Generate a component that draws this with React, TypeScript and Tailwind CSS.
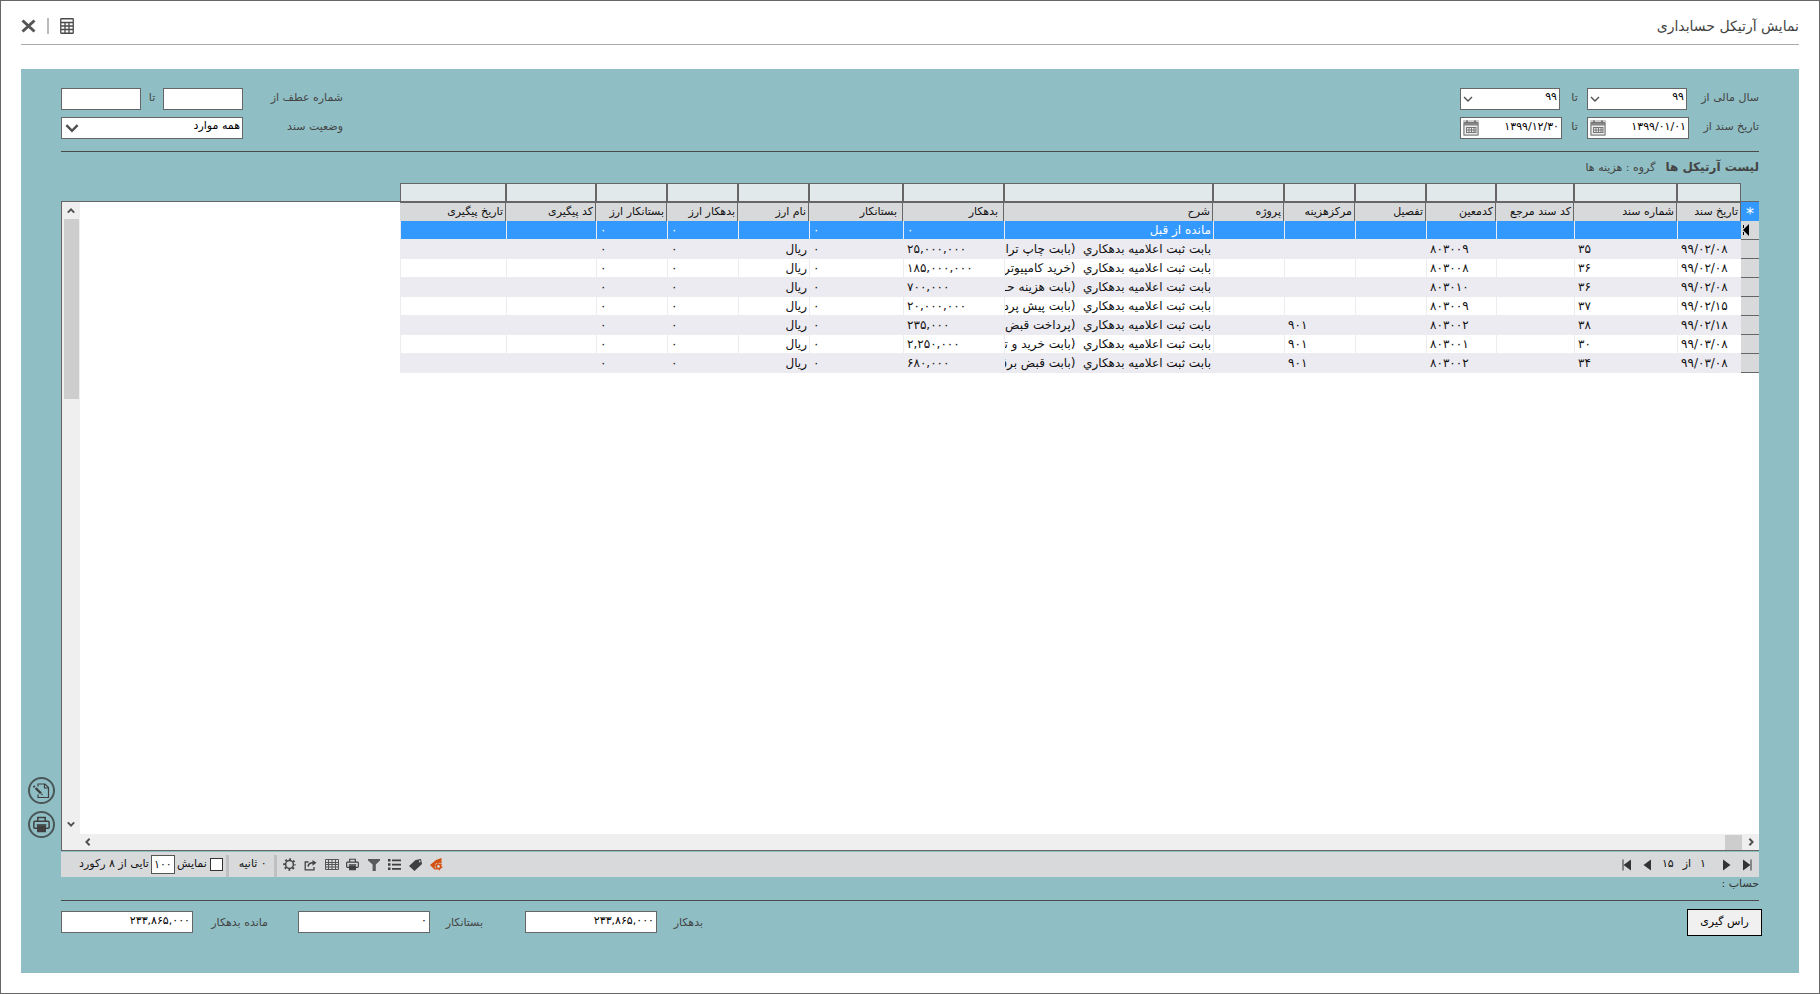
import React from 'react';
import { clsx } from 'clsx';

interface Column {
    title: string;
    width: string;
    key: string;
    text?: boolean;
    pad?: string;
}

const COLUMNS: Column[] = [
    { key: 'date', title: 'تاریخ سند', width: 'w-[64px]' },
    { key: 'number', title: 'شماره سند', width: 'w-[103px]' },
    { key: 'ref', title: 'کد سند مرجع', width: 'w-[78px]' },
    { key: 'account', title: 'کدمعین', width: 'w-[70px]' },
    { key: 'detail', title: 'تفصیل', width: 'w-[71px]' },
    { key: 'center', title: 'مرکزهزینه', width: 'w-[71px]' },
    { key: 'project', title: 'پروژه', width: 'w-[71px]' },
    { key: 'desc', title: 'شرح', width: 'w-[209px]', text: true },
    { key: 'debit', title: 'بدهکار', width: 'w-[101px]', pad: 'pr-[5px]' },
    { key: 'credit', title: 'بستانکار', width: 'w-[94px]', pad: 'pr-[5px]' },
    { key: 'currency', title: 'نام ارز', width: 'w-[71px]', text: true },
    { key: 'fxDebit', title: 'بدهکار ارز', width: 'w-[71px]' },
    { key: 'fxCredit', title: 'بستانکار ارز', width: 'w-[71px]' },
    { key: 'trackCode', title: 'کد پیگیری', width: 'w-[90px]' },
    { key: 'trackDate', title: 'تاریخ پیگیری', width: 'w-[106px]' },
];

type Row = Record<string, string>;

const entry = (date: string, number: string, account: string, center: string, note: string, debit: string): Row => ({
    date, number, account, center, debit,
    desc: `بابت ثبت اعلامیه بدهکاري  (${note}`,
    credit: '۰',
    currency: 'ریال',
    fxDebit: '۰',
    fxCredit: '۰',
});

const ROWS: Row[] = [
    { desc: 'مانده از قبل', debit: '۰', credit: '۰', fxDebit: '۰', fxCredit: '۰' },
    entry('۹۹/۰۲/۰۸', '۳۵', '۸۰۳۰۰۹', '', 'بابت چاپ ترا', '۲۵,۰۰۰,۰۰۰'),
    entry('۹۹/۰۲/۰۸', '۳۶', '۸۰۳۰۰۸', '', 'خرید کامپیوتر', '۱۸۵,۰۰۰,۰۰۰'),
    entry('۹۹/۰۲/۰۸', '۳۶', '۸۰۳۰۱۰', '', 'بابت هزینه حـ', '۷۰۰,۰۰۰'),
    entry('۹۹/۰۲/۱۵', '۳۷', '۸۰۳۰۰۹', '', 'بابت پیش پرد', '۲۰,۰۰۰,۰۰۰'),
    entry('۹۹/۰۲/۱۸', '۳۸', '۸۰۳۰۰۲', '۹۰۱', 'پرداخت قبض', '۲۳۵,۰۰۰'),
    entry('۹۹/۰۳/۰۸', '۳۰', '۸۰۳۰۰۱', '۹۰۱', 'بابت خرید و تـ', '۲,۲۵۰,۰۰۰'),
    entry('۹۹/۰۳/۰۸', '۳۴', '۸۰۳۰۰۲', '۹۰۱', 'بابت قبض برق', '۶۸۰,۰۰۰'),
];

const BOX = 'h-[22px] border border-[#666] bg-white px-[2px] pb-[4px] text-[11px] leading-[16px] text-black outline-none';

/* ---------- icons ---------- */

const CalculatorIcon = () => (
    <svg width="14" height="16" viewBox="0 0 14 16" fill="none" stroke="#4a4a4a" strokeWidth="1.3">
        <rect x="0.75" y="0.75" width="12.5" height="14.5" rx="0.5" />
        <path d="M1 4.5H13M1 8H13M1 11.5H13M5 4.5V15M9 4.5V15" />
    </svg>
);

const CalendarIcon = () => (
    <svg width="16" height="16" viewBox="0 0 16 16">
        <rect width="16" height="16" fill="#cfcfcf" />
        <path d="M1 2.5H15V15H1Z" fill="#ededed" stroke="#777" />
        <path d="M1 3H15V5.5H1Z" fill="#858585" />
        <path d="M4 0.5V3M12 0.5V3" stroke="#777" strokeWidth="2" />
        <path d="M3 7.5H13M3 10H13M3 12.5H13M3.5 7V13M6 7V13M8.5 7V13M11 7V13M13 7V13" stroke="#777" />
    </svg>
);

const PrinterIcon = ({ size }: { size: number }) => (
    <svg width={size} height={size} viewBox="0 0 16 16" fill="none" stroke="#3f3f3f" strokeWidth="1.4">
        <path d="M4.5 5V1.5H11.5V5" />
        <rect x="0.8" y="5" width="14.4" height="6.5" rx="1" />
        <path d="M3.5 8.5H12.5" strokeWidth="1.6" />
        <path d="M4.5 10H11.5V14.5H4.5Z" fill="#3f3f3f" />
    </svg>
);

const EditIcon = () => (
    <svg width="17" height="16" viewBox="0 0 17 16" fill="none" stroke="#3f3f3f" strokeWidth="1.2">
        <path d="M5 3.5V1H12L15.5 4.5V14.5H5V11.5" />
        <path d="M11.5 1V5H15.5" />
        <path d="M2.6 5L8 10.4" strokeWidth="2.4" />
        <path d="M0.6 3L1.7 4.1" strokeWidth="2.2" />
        <path d="M8.5 11L9.6 12" strokeWidth="1.2" />
    </svg>
);

const GearIcon = () => (
    <svg width="13" height="13" viewBox="0 0 13 13" fill="none" stroke="#444">
        <circle cx="6.5" cy="6.5" r="3.9" strokeWidth="1.5" />
        <circle cx="6.5" cy="6.5" r="5.4" strokeWidth="1.8" strokeDasharray="1.9 2.34" strokeDashoffset="1" />
    </svg>
);

const ShareIcon = () => (
    <svg width="13" height="12" viewBox="0 0 13 12" fill="none" stroke="#444" strokeWidth="1.3">
        <path d="M4.5 3H1.2V10.8H10V8" />
        <path d="M4 7.5C4.5 5 6 3.8 9 3.8" strokeWidth="1.6" />
        <path d="M8.5 1L12.5 3.8L8.5 6.8Z" fill="#444" stroke="none" />
    </svg>
);

const TableIcon = () => (
    <svg width="14" height="11" viewBox="0 0 14 11" fill="none" stroke="#555">
        <path d="M0.5 0.5H13.5V10.5H0.5ZM0.5 3.5H13.5M0.5 5.5H13.5M0.5 8H13.5M3.5 0.5V10.5M7 0.5V10.5M10.5 0.5V10.5" />
    </svg>
);

const FilterIcon = () => (
    <svg width="12" height="12" viewBox="0 0 12 12" fill="#5a5a5a">
        <path d="M0 0H12V1.5L7.8 5.5V12H4.6V5.5L0 1.5Z" />
    </svg>
);

const ListIcon = () => (
    <svg width="13" height="11" viewBox="0 0 13 11" fill="#3f3f3f">
        <path d="M0 0H2.5V2.5H0ZM4 0.5H13V2.2H4ZM0 4.2H2.5V6.7H0ZM4 4.7H13V6.4H4ZM0 8.5H2.5V11H0ZM4 9H13V10.7H4Z" />
    </svg>
);

const TagIcon = () => (
    <svg width="13" height="12" viewBox="0 0 13 12" fill="#3f3f3f">
        <path fillRule="evenodd" d="M6.5 1L12 0L13 5L5.5 12L0 7ZM10.7 1.6A0.8 0.8 0 1 0 10.8 1.6Z" />
    </svg>
);

const TagGearIcon = () => (
    <svg width="13" height="13" viewBox="0 0 13 13">
        <path d="M6 2L11.5 0V5L5 12L0 7Z" fill="#d4500f" />
        <circle cx="8.5" cy="8.5" r="3.8" fill="#d8d9db" />
        <circle cx="8.5" cy="8.5" r="2.2" fill="none" stroke="#d4500f" strokeWidth="1.6" />
        <circle cx="8.5" cy="8.5" r="3.4" fill="none" stroke="#d4500f" strokeWidth="1.2" strokeDasharray="1.5 2.06" />
    </svg>
);

const Chevron = ({ dir, size = 10, weight = 2 }: { dir: 'up' | 'down' | 'left' | 'right'; size?: number; weight?: number }) => (
    <svg
        width={size} height={size} viewBox="0 0 10 10" fill="none" stroke="#505050" strokeWidth={weight}
        className={clsx(dir === 'up' && 'rotate-180', dir === 'left' && 'rotate-90', dir === 'right' && '-rotate-90')}
    >
        <path d="M1 3L5 7L9 3" />
    </svg>
);

/* ---------- filters ---------- */

const YearSelect = ({ id }: { id: string }) => (
    <div className="relative">
        <select id={id} className={clsx(BOX, 'w-[100px] appearance-none')}>
            <option>۹۹</option>
        </select>
        <span className="pointer-events-none absolute top-[6px] left-[3px]"><Chevron dir="down" weight={1.4} /></span>
    </div>
);

const DateBox = ({ id, value }: { id: string; value: string }) => (
    <div className="relative">
        <input id={id} defaultValue={value} className={clsx(BOX, 'w-[102px]')} />
        <button aria-label="تقویم" className="absolute top-[3px] left-[3px]"><CalendarIcon /></button>
    </div>
);

const Filters = () => (
    <div className="flex justify-between border-b border-[#4a4a4a] pb-[12px] text-[11px] text-[#444]">
        <div className="grid grid-cols-[70px_102px_25px_102px] gap-y-[7px]">
            <label htmlFor="yearFrom" className="leading-[20px]">سال مالی از</label>
            <div className="flex justify-start pr-[2px]"><YearSelect id="yearFrom" /></div>
            <label htmlFor="yearTo" className="text-center leading-[20px]">تا</label>
            <div className="flex justify-start pr-[2px]"><YearSelect id="yearTo" /></div>
            <label htmlFor="dateFrom" className="leading-[20px]">تاریخ سند از</label>
            <DateBox id="dateFrom" value="۱۳۹۹/۰۱/۰۱" />
            <label htmlFor="dateTo" className="text-center leading-[20px]">تا</label>
            <DateBox id="dateTo" value="۱۳۹۹/۱۲/۳۰" />
        </div>
        <div className="grid grid-cols-[100px_80px_22px_80px] gap-y-[7px]">
            <label htmlFor="refFrom" className="leading-[20px]">شماره عطف از</label>
            <input id="refFrom" className={clsx(BOX, 'w-full')} />
            <label htmlFor="refTo" className="text-center leading-[20px]">تا</label>
            <input id="refTo" className={clsx(BOX, 'w-full')} />
            <label htmlFor="status" className="leading-[20px]">وضعیت سند</label>
            <div className="relative col-span-3">
                <select id="status" className={clsx(BOX, 'w-full appearance-none')}>
                    <option>همه موارد</option>
                </select>
                <span className="pointer-events-none absolute top-[4px] left-[4px]"><Chevron dir="down" size={14} weight={1.8} /></span>
            </div>
        </div>
    </div>
);

/* ---------- grid ---------- */

const cellColor = (i: number) => (i === 0 ? 'bg-[#3399ff] text-white' : i % 2 ? 'bg-[#ecebf1]' : 'bg-white');

const ArticleTable = () => (
    <table className="w-[1359px] table-fixed border-separate border-spacing-0 text-[12px] leading-[18px] text-[#111]">
        <thead>
            <tr className="h-[19px]">
                <th className="w-[18px] bg-[#3399ff] p-0 pt-[5px] text-[16px] leading-[14px] font-normal text-white">*</th>
                {COLUMNS.map((c) => (
                    <th
                        key={c.key}
                        className={clsx('overflow-hidden border-t border-r border-[#666] bg-[#d8d9db] p-0 text-right text-[11px] font-normal whitespace-nowrap', c.width, c.pad ?? 'pr-[2px]')}
                    >
                        {c.title}
                    </th>
                ))}
            </tr>
        </thead>
        <tbody>
            {ROWS.map((row, i) => (
                <tr key={i} className="h-[19px]">
                    <td className="border-b border-[#666] bg-[#d8d9db] p-0">
                        {i === 0 && (
                            <svg width="8" height="12" viewBox="0 0 8 12" className="mr-auto ml-[2px]">
                                <path d="M6 0V12L0 6Z" /><path d="M0.5 1V4M0.5 8V11" stroke="#000" />
                            </svg>
                        )}
                    </td>
                    {COLUMNS.map((c) => (
                        <td
                            key={c.key}
                            className={clsx('overflow-hidden border-b border-l border-[#ececf0] p-0 whitespace-pre', cellColor(i), c.text ? 'pr-[2px] text-right' : 'pl-[3px] text-left')}
                        >
                            {row[c.key]}
                        </td>
                    ))}
                </tr>
            ))}
        </tbody>
    </table>
);

const Grid = () => (
    <div className="flex flex-1 flex-col">
        <div className="flex pr-[18px]">
            {COLUMNS.map((c) => (
                <input key={c.key} aria-label={c.title} className={clsx('h-[18px] shrink-0 border border-b-0 border-[#666] bg-[#e1e9eb] outline-none', c.width)} />
            ))}
        </div>
        <div className="flex flex-1 flex-col border-y border-l border-[#666] bg-white">
            <div className="flex flex-1">
                <div className="min-w-0 flex-1 overflow-hidden"><ArticleTable /></div>
                <div className="flex w-[18px] flex-col items-center bg-[#efefef]">
                    <button aria-label="بالا" className="flex h-[17px] items-center"><Chevron dir="up" size={8} weight={2.4} /></button>
                    <div className="h-[180px] w-[15px] bg-[#cdcdcd]" />
                    <button aria-label="پایین" className="mt-auto flex h-[20px] items-center"><Chevron dir="down" size={8} weight={2.4} /></button>
                </div>
            </div>
            <div className="flex h-[16px] items-center bg-[#efefef] pl-[20px]">
                <button aria-label="راست" className="flex w-[17px] justify-center"><Chevron dir="right" size={8} weight={2.4} /></button>
                <div className="h-[15px] w-[17px] bg-[#cdcdcd]" />
                <button aria-label="چپ" className="mr-auto flex w-[12px] justify-center"><Chevron dir="left" size={8} weight={2.4} /></button>
            </div>
        </div>
    </div>
);

const PagerArrow = ({ label, flip, bar }: { label: string; flip?: boolean; bar?: boolean }) => (
    <button aria-label={label}>
        <svg width="9" height="12" viewBox="0 0 9 12" className={clsx(flip && 'rotate-180')}>
            <path d="M0 0.5V11.5L7.5 6Z" fill="#333" />
            {bar && <path d="M8 0.5V11.5" stroke="#333" />}
        </svg>
    </button>
);

const TOOLS = [
    { label: 'برچسب رنگی', icon: <TagGearIcon /> },
    { label: 'برچسب', icon: <TagIcon /> },
    { label: 'فهرست', icon: <ListIcon /> },
    { label: 'فیلتر', icon: <FilterIcon /> },
    { label: 'چاپ', icon: <PrinterIcon size={13} /> },
    { label: 'جدول', icon: <TableIcon /> },
    { label: 'خروجی', icon: <ShareIcon /> },
    { label: 'تنظیمات', icon: <GearIcon /> },
];

const Toolbar = () => (
    <div className="mt-px flex h-[25px] items-center justify-between bg-[#d8d9db] pr-[7px] pl-[18px] text-[11px] text-[#111]">
        <div className="flex items-center gap-[11px]">
            <PagerArrow label="آخرین" bar />
            <PagerArrow label="بعدی" />
            <span className="flex gap-[9px] pr-[6px]"><span>۱</span><span>از</span><span>۱۵</span></span>
            <PagerArrow label="قبلی" flip />
            <PagerArrow label="اولین" flip bar />
        </div>
        <div className="flex h-full items-center">
            <div className="flex items-center gap-[7px] pl-[6px]">
                {TOOLS.map((t) => (
                    <button key={t.label} aria-label={t.label} className="flex w-[14px] justify-center">{t.icon}</button>
                ))}
            </div>
            <span className="h-[22px] w-[3px] self-end bg-[#c0c0c0]" />
            <span className="w-[45px] pr-[7px]">۰ ثانیه</span>
            <span className="h-[22px] w-[3px] self-end bg-[#c0c0c0]" />
            <label className="flex items-center gap-[3px] pr-[3px]">
                <input type="checkbox" className="h-[13px] w-[13px] appearance-none border border-[#333] bg-white" />
                نمایش
            </label>
            <input aria-label="تعداد" defaultValue="۱۰۰" className="mx-[2px] h-[19px] w-[24px] border border-[#555] bg-white text-center text-[11px] outline-none" />
            <span>تایی از ۸ رکورد</span>
        </div>
    </div>
);

const Total = ({ id, label, value, className }: { id: string; label: string; value: string; className: string }) => (
    <div className={clsx('flex justify-between', className)}>
        <label htmlFor={id} className="leading-[24px]">{label}</label>
        <input id={id} defaultValue={value} className={clsx(BOX, 'w-[132px]')} />
    </div>
);

const App: React.FC = () => (
    <div dir="rtl" className="flex min-h-screen flex-col border border-[#666] bg-white px-[20px] pb-[20px] font-['DejaVu_Sans',sans-serif]">
        <header className="flex h-[44px] items-center justify-between border-b border-[#aaa] pt-[7px]">
            <h1 className="text-[14px] text-[#444]">نمایش آرتیکل حسابداری</h1>
            <div className="flex items-center gap-[11px]">
                <button aria-label="ماشین حساب"><CalculatorIcon /></button>
                <span className="h-[16px] w-[2px] bg-[#bbb]" />
                <button aria-label="بستن">
                    <svg width="15" height="14" viewBox="0 0 15 14" stroke="#555" strokeWidth="3"><path d="M1.5 1.5L13.5 12.5M13.5 1.5L1.5 12.5" /></svg>
                </button>
            </div>
        </header>
        <main className="relative mt-[24px] flex flex-1 flex-col bg-[#8fbfc5] px-[40px] pt-[19px]">
            <Filters />
            <div className="flex h-[31px] items-baseline gap-[10px] leading-[30px] text-[#444]">
                <h2 className="text-[12px] font-bold">لیست آرتیکل ها</h2>
                <span className="text-[11px]">گروه : هزینه ها</span>
            </div>
            <Grid />
            <Toolbar />
            <div className="h-[24px] border-b border-[#4a4a4a] text-[11px] leading-[14px] text-[#333]">حساب :</div>
            <footer className="flex h-[72px] items-start justify-between pt-[10px] text-[11px] text-[#444]">
                <button className="-mt-[2px] -mr-[3px] h-[27px] w-[75px] border border-black bg-[#f0f0f0] text-[11px] text-black">راس گیری</button>
                <div className="flex">
                    <Total id="debit" label="بدهکار" value="۲۳۳,۸۶۵,۰۰۰" className="ml-[42px] w-[178px]" />
                    <Total id="credit" label="بستانکار" value="۰" className="ml-[30px] w-[185px]" />
                    <Total id="balance" label="مانده بدهکار" value="۲۳۳,۸۶۵,۰۰۰" className="w-[207px]" />
                </div>
            </footer>
            <div className="absolute bottom-[135px] left-[7px] flex flex-col gap-[7px]">
                <button aria-label="ویرایش" className="flex h-[27px] w-[27px] items-center justify-center rounded-full border-2 border-[#4a5658]"><EditIcon /></button>
                <button aria-label="چاپ سند" className="flex h-[27px] w-[27px] items-center justify-center rounded-full border-2 border-[#4a5658]"><PrinterIcon size={17} /></button>
            </div>
        </main>
    </div>
);

export default App;
